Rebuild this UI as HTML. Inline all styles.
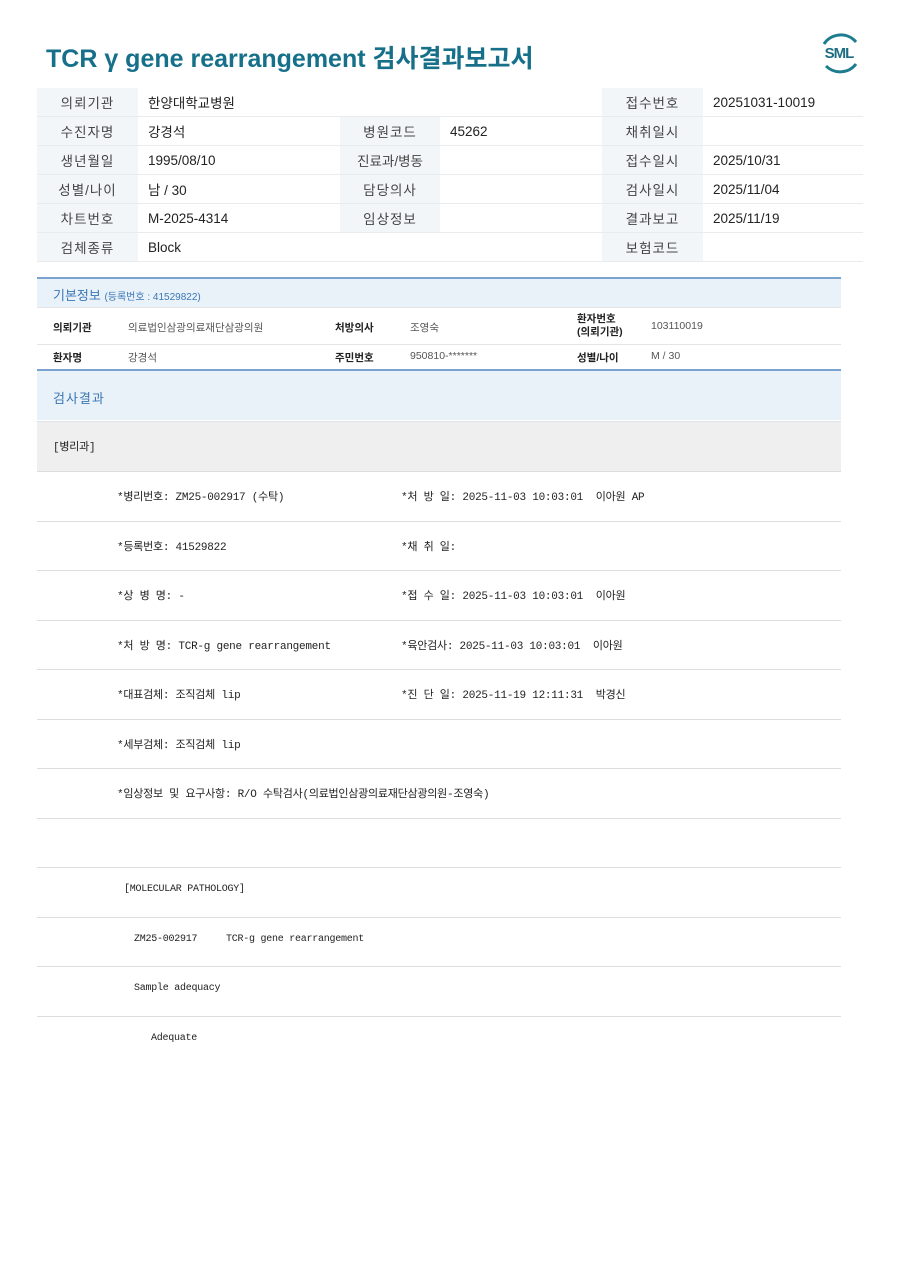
<!DOCTYPE html><html><head><meta charset="utf-8"><style>
body{margin:0;width:900px;height:1271px;background:#fff;font-family:"Liberation Sans","Noto Sans CJK KR",sans-serif;position:relative;overflow:hidden}
.a{position:absolute;white-space:pre}
h1{position:absolute;left:46px;top:39px;margin:0;font-size:25px;font-weight:bold;color:#17708a;letter-spacing:0}
table.t{position:absolute;left:37px;top:88px;width:826px;border-collapse:collapse;font-size:13.5px;color:#222}
table.t td{height:28px;border-bottom:1px solid #e8ecef;padding:0}
.l{background:#f3f6f8;text-align:center;color:#444;letter-spacing:1px}
.v{padding-left:10px!important}
.mono{font-family:"Liberation Mono","Noto Sans CJK KR",monospace;font-size:11px;letter-spacing:-0.25px;color:#222}
.line{position:absolute;left:37px;width:804px;height:1px;background:#ddd}
.s{font-size:10.5px;color:#555}
.sb{font-size:10.5px;color:#222;font-weight:bold}
</style></head><body>
<h1>TCR γ gene rearrangement 검사결과보고서</h1>
<svg class="a" style="left:816px;top:30px" width="46" height="46" viewBox="0 0 46 46">
<path d="M8 14 A20 20 0 0 1 40 12" fill="none" stroke="#1d7d8e" stroke-width="3"/>
<path d="M40 34 A20 20 0 0 1 10 36" fill="none" stroke="#1d7d8e" stroke-width="3"/>
<text x="23" y="28" text-anchor="middle" font-family="Liberation Sans" font-weight="bold" font-size="15" fill="#1d6d80" letter-spacing="-1">SML</text></svg>
<table class="t">
<tr><td class="l" style="width:101px">의뢰기관</td><td class="v" colspan="3">한양대학교병원</td><td class="l" style="width:101px">접수번호</td><td class="v">20251031-10019</td></tr>
<tr><td class="l">수진자명</td><td class="v" style="width:192px">강경석</td><td class="l" style="width:100px">병원코드</td><td class="v" style="width:152px">45262</td><td class="l">채취일시</td><td class="v"></td></tr>
<tr><td class="l">생년월일</td><td class="v">1995/08/10</td><td class="l" style="letter-spacing:0">진료과/병동</td><td class="v"></td><td class="l">접수일시</td><td class="v">2025/10/31</td></tr>
<tr><td class="l">성별/나이</td><td class="v">남 / 30</td><td class="l">담당의사</td><td class="v"></td><td class="l">검사일시</td><td class="v">2025/11/04</td></tr>
<tr><td class="l">차트번호</td><td class="v">M-2025-4314</td><td class="l">임상정보</td><td class="v"></td><td class="l">결과보고</td><td class="v">2025/11/19</td></tr>
<tr><td class="l">검체종류</td><td class="v" colspan="3">Block</td><td class="l">보험코드</td><td class="v"></td></tr>
</table>
<div class="a" style="left:37px;top:277px;width:804px;height:2px;background:#7ba3cf"></div>
<div class="a" style="left:37px;top:279px;width:804px;height:28px;background:#eaf2f9"></div>
<div class="a" style="left:53px;top:285px;font-size:13px;color:#3a77b5">기본정보 <span style="font-size:10px">(등록번호 : 41529822)</span></div>
<div class="line" style="top:307px;background:#e5e5e5"></div>
<div class="a sb" style="left:53px;top:320px">의뢰기관</div>
<div class="a s" style="left:128px;top:320px">의료법인삼광의료재단삼광의원</div>
<div class="a sb" style="left:335px;top:320px">처방의사</div>
<div class="a s" style="left:410px;top:320px">조영숙</div>
<div class="a sb" style="left:577px;top:313px;line-height:13px">환자번호
(의뢰기관)</div>
<div class="a s" style="left:651px;top:320px">103110019</div>
<div class="line" style="top:344px;background:#e5e5e5"></div>
<div class="a sb" style="left:53px;top:350px">환자명</div>
<div class="a s" style="left:128px;top:350px">강경석</div>
<div class="a sb" style="left:335px;top:350px">주민번호</div>
<div class="a s" style="left:410px;top:350px">950810-*******</div>
<div class="a sb" style="left:577px;top:350px">성별/나이</div>
<div class="a s" style="left:651px;top:350px">M / 30</div>
<div class="a" style="left:37px;top:369px;width:804px;height:2px;background:#7ba3cf"></div>
<div class="a" style="left:37px;top:371px;width:804px;height:49px;background:#eaf2f9"></div>
<div class="a" style="left:53px;top:388px;font-size:13px;color:#3a77b5;letter-spacing:1px">검사결과</div>
<div class="a" style="left:37px;top:421px;width:804px;height:50px;background:#efefef;border-top:1px solid #dde3ea"></div>
<div class="a mono" style="left:53px;top:438px">[병리과]</div>
<div class="line" style="top:471px"></div>
<div class="line" style="top:521px"></div><div class="line" style="top:570px"></div><div class="line" style="top:620px"></div><div class="line" style="top:669px"></div><div class="line" style="top:719px"></div><div class="line" style="top:768px"></div><div class="line" style="top:818px"></div><div class="line" style="top:867px"></div><div class="line" style="top:917px"></div><div class="line" style="top:966px"></div><div class="line" style="top:1016px"></div>
<div class="a mono" style="left:117px;top:488px">*병리번호: ZM25-002917 (수탁)</div>
<div class="a mono" style="left:401px;top:488px">*처 방 일: 2025-11-03 10:03:01  이아원 AP</div>
<div class="a mono" style="left:117px;top:538px">*등록번호: 41529822</div>
<div class="a mono" style="left:401px;top:538px">*채 취 일:</div>
<div class="a mono" style="left:117px;top:587px">*상 병 명: -</div>
<div class="a mono" style="left:401px;top:587px">*접 수 일: 2025-11-03 10:03:01  이아원</div>
<div class="a mono" style="left:117px;top:637px">*처 방 명: TCR-g gene rearrangement</div>
<div class="a mono" style="left:401px;top:637px">*육안검사: 2025-11-03 10:03:01  이아원</div>
<div class="a mono" style="left:117px;top:686px">*대표검체: 조직검체 lip</div>
<div class="a mono" style="left:401px;top:686px">*진 단 일: 2025-11-19 12:11:31  박경신</div>
<div class="a mono" style="left:117px;top:736px">*세부검체: 조직검체 lip</div>
<div class="a mono" style="left:117px;top:785px">*임상정보 및 요구사항: R/O 수탁검사(의료법인삼광의료재단삼광의원-조영숙)</div>
<div class="a mono" style="left:124px;top:884px;font-size:10px">[MOLECULAR PATHOLOGY]</div>
<div class="a mono" style="left:134px;top:934px;font-size:10px">ZM25-002917     TCR-g gene rearrangement</div>
<div class="a mono" style="left:134px;top:983px;font-size:10px">Sample adequacy</div>
<div class="a mono" style="left:151px;top:1033px;font-size:10px">Adequate</div>
</body></html>
